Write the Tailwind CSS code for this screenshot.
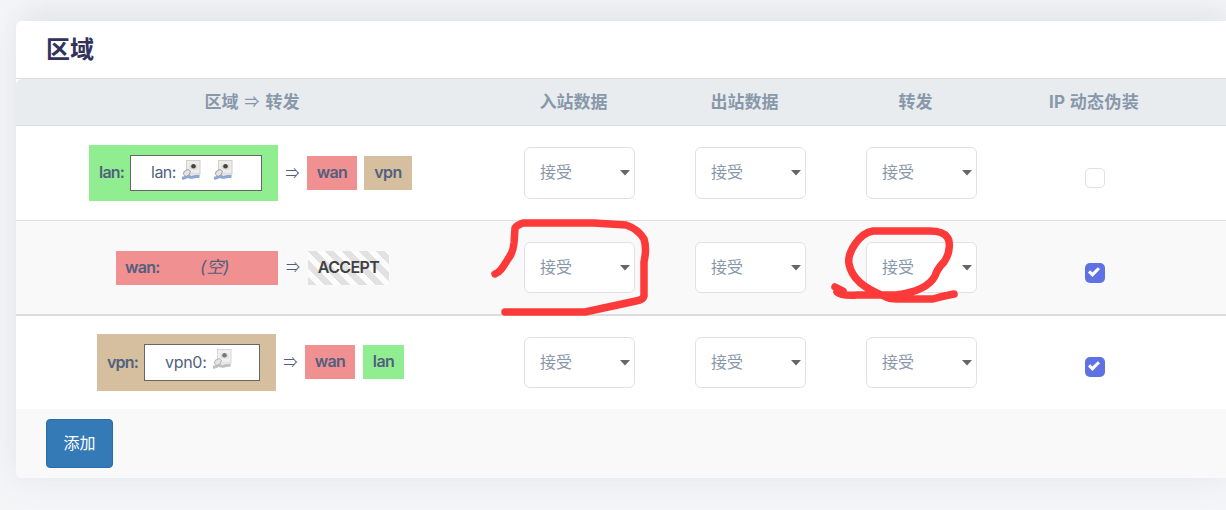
<!DOCTYPE html>
<html lang="zh-CN">
<head>
<meta charset="utf-8">
<title>区域</title>
<script src="https://cdn.jsdelivr.net/npm/@tailwindcss/browser@4"></script>
</head>
<body class="w-[1226px] h-[510px] overflow-hidden relative bg-[#f4f5f7] text-base text-[#525f7f] font-['Inter','Noto_Sans_CJK_SC',sans-serif]">
<svg class="hidden">
  <symbol id="port" viewBox="0 0 20 20">
    <rect x="5.500" y=".5" width="13.500" height="13.500" fill="#ececea" stroke="#cfcfcd"/>
    <path d="M8.500 4.500h8v5h-8z" fill="#dcdcd8"/>
    <circle cx="12.500" cy="6.200" r="2.300" fill="#45453c"/>
    <path d="M1 18.500q4-1 6-2.500 2 2 6 .8 3-.8 5.500-.3" fill="none" stroke="currentColor" stroke-width="3.200"/>
    <path d="M3 11.500l4-2 2.500 2-1.500 3.500-3 1.500-2.500-2z" fill="#e6e6e6" stroke="#a0a0a0"/>
  </symbol>
  <symbol id="port-off" viewBox="0 0 20 20">
    <rect x="5.500" y=".5" width="13.500" height="13.500" fill="#f0f0f0" stroke="#d6d6d6"/>
    <path d="M8.500 4.500h8v5h-8z" fill="#dedede"/>
    <circle cx="12.500" cy="6.200" r="2.300" fill="#777"/>
    <path d="M1 18.500q4-1 6-2.500 2 2 6 .8 3-.8 5.500-.3" fill="none" stroke="#c0c0c0" stroke-width="3"/>
    <path d="M3 11.500l4-2 2.500 2-1.500 3.500-3 1.500-2.500-2z" fill="#e6e6e6" stroke="#b4b4b4"/>
  </symbol>
  <symbol id="tick" viewBox="0 0 8 8"><path fill="#fff" d="M6.564.75l-3.590 3.612-1.538-1.550L0 4.260 2.974 7.250 8 2.193z"/></symbol>
</svg>
<main class="ml-4 mt-[21px] h-[457px] rounded-l-md overflow-hidden bg-white shadow-[0_0_32px_0_rgba(136,152,170,0.15),8px_-20px_24px_0_rgba(136,152,170,0.06)]">
  <h3 class="h-[58px] border-b border-[#dddddd] pl-[30px] text-[24px] leading-[58px] font-bold text-[#32325d]">区域</h3>
  <div class="bg-white"><div class="grid grid-cols-[472px_171px_171px_171px_186px] h-[47px] bg-[#e8ecef] rounded-tl-md border-b border-[#dddddd] text-center text-[17px] leading-[46px] font-bold text-[#8898aa]">
    <div class="flex justify-center gap-[5px]"><span>区域</span><span class="w-[17px] font-['Noto_Sans_CJK_SC'] text-[15px] leading-[44px] font-medium">⇒</span><span>转发</span></div><div>入站数据</div><div>出站数据</div><div>转发</div><div class="tracking-[0.3px]">IP 动态伪装</div>
  </div></div>

  <div class="grid grid-cols-[472px_171px_171px_171px_186px] h-[95px] items-center border-b border-[#dddddd]">
    <div class="flex items-center pl-[73px]">
      <div class="w-[189px] h-[56px] bg-[#90ee90] flex items-center pl-[10px]">
        <b class="w-[31px] pb-[2px] font-semibold tracking-[-0.8px]">lan:</b>
        <div class="w-[132px] h-[36px] border border-[#666] bg-white flex items-center pl-[20px]"><span class="w-[30px] pb-[2px] tracking-[-0.5px]">lan:</span><svg class="size-5 mb-[6px] text-[#8aa8d4]"><use href="#port"/></svg><svg class="size-5 mb-[6px] ml-3 text-[#8aa8d4]"><use href="#port"/></svg></div>
      </div>
      <span class="w-[29px] pb-[2px] text-center text-[14px] font-['Noto_Sans_CJK_SC']">⇒</span>
      <b class="w-[50px] h-[34px] bg-[#f09090] text-center leading-[33px] font-semibold tracking-[-0.6px]">wan</b>
      <b class="ml-[7px] w-[48px] h-[34px] bg-[#d6bf9f] text-center leading-[33px] font-semibold tracking-[-0.6px]">vpn</b>
    </div>
    <div class="pl-9"><div class="w-[111px] h-[52px] rounded-md border border-[#dee2e6] bg-white flex items-center justify-between pl-[15px] pr-1 text-[#8898aa]"><span class="pb-[2px]">接受</span><svg class="w-[10px] h-[6px]" viewBox="0 0 10 6"><path d="M0 0h10L5 5.500z" fill="#666"/></svg></div></div>
    <div class="pl-9"><div class="w-[111px] h-[52px] rounded-md border border-[#dee2e6] bg-white flex items-center justify-between pl-[15px] pr-1 text-[#8898aa]"><span class="pb-[2px]">接受</span><svg class="w-[10px] h-[6px]" viewBox="0 0 10 6"><path d="M0 0h10L5 5.500z" fill="#666"/></svg></div></div>
    <div class="pl-9"><div class="w-[111px] h-[52px] rounded-md border border-[#dee2e6] bg-white flex items-center justify-between pl-[15px] pr-1 text-[#8898aa]"><span class="pb-[2px]">接受</span><svg class="w-[10px] h-[6px]" viewBox="0 0 10 6"><path d="M0 0h10L5 5.500z" fill="#666"/></svg></div></div>
    <div class="pl-[84px] pt-[10px]"><div class="size-5 rounded-[5px] border border-[#dee2e6]"></div></div>
  </div>

  <div class="grid grid-cols-[472px_171px_171px_171px_186px] h-[95px] items-center border-b-2 border-[#dddddd] bg-[#f9f9f9]">
    <div class="flex items-center pl-[100px]">
      <div class="w-[162px] h-[34px] bg-[#f09090] flex items-center pl-[9px]">
        <b class="w-[75px] pb-px font-semibold tracking-[-0.7px]">wan:</b><em class="text-[17px]">(空)</em>
      </div>
      <span class="w-[30px] pb-[2px] text-center text-[14px] font-['Noto_Sans_CJK_SC']">⇒</span>
      <b class="w-[81px] h-[34px] text-center leading-[33px] font-semibold tracking-[-0.6px] text-[#404040] bg-[repeating-linear-gradient(45deg,#e2e2e2_0_6px,#fcfcfc_6px_12px)]">ACCEPT</b>
    </div>
    <div class="pl-9"><div class="w-[111px] h-[51px] rounded-md border border-[#dee2e6] bg-white flex items-center justify-between pl-[15px] pr-1 text-[#8898aa]"><span class="pb-px">接受</span><svg class="w-[10px] h-[6px]" viewBox="0 0 10 6"><path d="M0 0h10L5 5.500z" fill="#666"/></svg></div></div>
    <div class="pl-9"><div class="w-[111px] h-[51px] rounded-md border border-[#dee2e6] bg-white flex items-center justify-between pl-[15px] pr-1 text-[#8898aa]"><span class="pb-px">接受</span><svg class="w-[10px] h-[6px]" viewBox="0 0 10 6"><path d="M0 0h10L5 5.500z" fill="#666"/></svg></div></div>
    <div class="pl-9"><div class="w-[111px] h-[51px] rounded-md border border-[#dee2e6] bg-white flex items-center justify-between pl-[15px] pr-1 text-[#8898aa]"><span class="pb-px">接受</span><svg class="w-[10px] h-[6px]" viewBox="0 0 10 6"><path d="M0 0h10L5 5.500z" fill="#666"/></svg></div></div>
    <div class="pl-[84px] pt-[11px]"><div class="size-5 rounded-[5px] bg-[#5e72e4] pl-[3px] pt-[3px]"><svg class="size-3"><use href="#tick"/></svg></div></div>
  </div>

  <div class="grid grid-cols-[472px_171px_171px_171px_186px] h-[93px] items-center">
    <div class="flex items-center pl-[81px]">
      <div class="w-[179px] h-[57px] bg-[#d6bf9f] flex items-center pl-[10px]">
        <b class="w-[37px] pb-[2px] font-semibold tracking-[-0.8px]">vpn:</b>
        <div class="w-[116px] h-[37px] border border-[#666] bg-white flex items-center pl-[20px]"><span class="w-[47px] pb-[2px] tracking-[-0.3px]">vpn0:</span><svg class="size-5 mb-[7px]"><use href="#port-off"/></svg></div>
      </div>
      <span class="w-[29px] pb-[3px] text-center text-[14px] font-['Noto_Sans_CJK_SC']">⇒</span>
      <b class="mb-[2px] w-[50px] h-[34px] bg-[#f09090] text-center leading-[33px] font-semibold tracking-[-0.6px]">wan</b>
      <b class="mb-[2px] ml-2 w-[41px] h-[34px] bg-[#90ee90] text-center leading-[33px] font-semibold tracking-[-0.6px]">lan</b>
    </div>
    <div class="pl-9"><div class="w-[111px] h-[51px] rounded-md border border-[#dee2e6] bg-white flex items-center justify-between pl-[15px] pr-1 text-[#8898aa]"><span class="pb-[2px]">接受</span><svg class="w-[10px] h-[6px]" viewBox="0 0 10 6"><path d="M0 0h10L5 5.500z" fill="#666"/></svg></div></div>
    <div class="pl-9"><div class="w-[111px] h-[51px] rounded-md border border-[#dee2e6] bg-white flex items-center justify-between pl-[15px] pr-1 text-[#8898aa]"><span class="pb-[2px]">接受</span><svg class="w-[10px] h-[6px]" viewBox="0 0 10 6"><path d="M0 0h10L5 5.500z" fill="#666"/></svg></div></div>
    <div class="pl-9"><div class="w-[111px] h-[51px] rounded-md border border-[#dee2e6] bg-white flex items-center justify-between pl-[15px] pr-1 text-[#8898aa]"><span class="pb-[2px]">接受</span><svg class="w-[10px] h-[6px]" viewBox="0 0 10 6"><path d="M0 0h10L5 5.500z" fill="#666"/></svg></div></div>
    <div class="pl-[84px] pt-[9px]"><div class="size-5 rounded-[5px] bg-[#5e72e4] pl-[3px] pt-[3px]"><svg class="size-3"><use href="#tick"/></svg></div></div>
  </div>

  <div class="h-[69px] bg-[#f9f9f9] pl-[30px] pt-[10px]">
    <button class="block w-[67px] h-[49px] rounded border border-[#2e6da4] bg-[#337ab7] pb-[2px] text-white">添加</button>
  </div>
</main>

<svg class="absolute inset-0 pointer-events-none" width="1226" height="510" fill="none" stroke="#fd3a3a" stroke-width="7.500" stroke-linecap="round" stroke-linejoin="round">
  <path d="M495 274C501 272 504 265 508 259Q513 253 514 243L515 228Q517 225 523 223H594L626 225Q638 229 644 239Q647 248 644 262V296Q643 300 636 301L585 312H505"/>
  <path d="M835 287L843 291M837 292Q841 296 857 295L896 295Q927 291 935 276Q937 269 944 262C951 252 950 240 947 237Q943 231 930 231H873C859 233 847 253 849 264C852 280 868 290 884 296Q889 299 897 299H933Q943 296 954 294"/>
</svg>
</body>
</html>
